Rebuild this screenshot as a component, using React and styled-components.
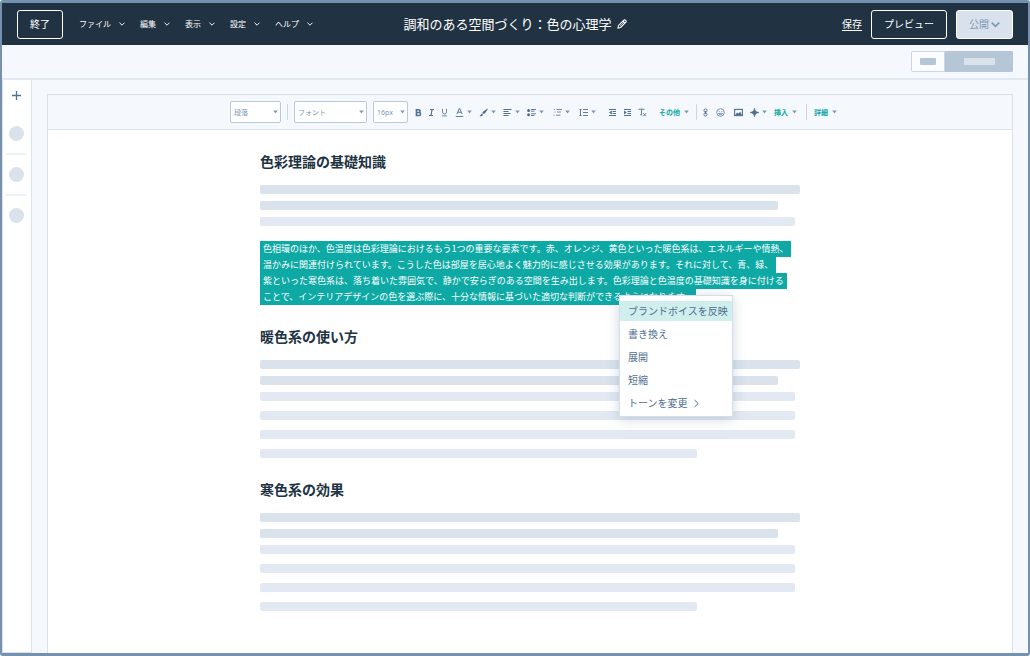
import React, { useState } from 'react';
import styled, { createGlobalStyle } from 'styled-components';

const colors = {
    navy: '#213343',
    slate: '#516f90',
    muted: '#7c98b6',
    line: '#dae3ed',
    field: '#b9c8dc',
    panel: '#f5f8fc',
    fill: '#b5c6d6',
    teal: '#0ea9a5',
}

const GlobalStyle = createGlobalStyle`
    *, *::before, *::after {
        box-sizing: border-box;
    }
    body {
        margin: 0;
        background: #fff;
        color: ${colors.navy};
        font-family: 'Noto Sans CJK JP', 'Noto Sans', sans-serif;
    }
    button, select {
        margin: 0;
        font-family: inherit;
    }
    svg {
        display: block;
        flex: none;
    }
`

const Frame = styled.div`
    display: flex;
    flex-direction: column;
    min-height: 100vh;
    border: solid #7691b0;
    border-width: 3px 2px;
    border-radius: 3px;
    background: ${colors.panel};
`

const Header = styled.header`
    display: grid;
    grid-template-columns: 1fr auto 1fr;
    align-items: center;
    height: 42px;
    padding: 0 15px;
    background: ${colors.navy};
    color: #fff;
`

const HeaderSide = styled.div`
    display: flex;
    align-items: center;
    justify-content: ${({ $end }) => ($end ? 'flex-end' : 'flex-start')};
    gap: ${({ $end }) => ($end ? '9px' : '16px')};
`

const HeaderButton = styled.button`
    display: flex;
    align-items: center;
    gap: 2px;
    height: 29px;
    padding: 0 12px;
    border: 1px solid #fff;
    border-radius: 3px;
    background: ${({ $primary }) => ($primary ? '#d9e2ec' : 'transparent')};
    color: ${({ $primary }) => ($primary ? colors.muted : '#fff')};
    font-size: 10px;
    line-height: 16px;
`

const MenuBar = styled.nav`
    display: flex;
    gap: 15px;
`

const MenuButton = styled.button`
    display: flex;
    align-items: center;
    gap: 8px;
    padding: 0;
    border: 0;
    background: none;
    color: #fff;
    font-size: 8px;
    line-height: 16px;
    white-space: nowrap;
`

const DocTitle = styled.div`
    display: flex;
    align-items: center;
    gap: 5px;

    h1 {
        margin: 0;
        font-size: 13px;
        line-height: 20px;
        font-weight: 400;
    }
`

const IconButton = styled.button`
    display: flex;
    align-items: center;
    justify-content: center;
    padding: 0;
    border: 0;
    background: none;
    color: inherit;
`

const SaveLink = styled.a`
    color: #fff;
    font-size: 10px;
    line-height: 16px;
    text-underline-offset: 2px;
`

const SubBar = styled.div`
    display: flex;
    align-items: center;
    justify-content: flex-end;
    height: 35px;
    padding: 0 15px;
    border-bottom: 2px solid #e1e9f1;
`

const Toggle = styled.div`
    display: flex;
    height: 21px;
    border-radius: 2px;
    overflow: hidden;
`

const ToggleButton = styled.button`
    display: flex;
    align-items: center;
    justify-content: center;
    width: ${({ $active }) => ($active ? '68px' : '34px')};
    padding: 0;
    border: 1px solid ${({ $active }) => ($active ? colors.fill : '#cbd6e2')};
    background: ${({ $active }) => ($active ? colors.fill : '#fafcfe')};

    span {
        width: ${({ $active }) => ($active ? '31px' : '16px')};
        height: 7px;
        border-radius: 1px;
        background: ${({ $active }) => ($active ? '#dae3ec' : colors.fill)};
    }
`

const Body = styled.div`
    display: flex;
    flex: 1;
`

const Sidebar = styled.aside`
    display: flex;
    flex-direction: column;
    align-items: center;
    gap: 12px;
    width: 30px;
    padding: 11px 2px 11px 0;
    border: 1px solid ${colors.line};
    border-top: 0;
    background: #fff;
    color: ${colors.slate};
`

const AddButton = styled(IconButton)`
    margin-bottom: 14px;
`

const Dot = styled.span`
    width: 15px;
    height: 15px;
    border-radius: 50%;
    background: #dae2ec;
`

const Rule = styled.span`
    width: 20px;
    height: 2px;
    background: #edf2f8;
`

const Main = styled.main`
    display: flex;
    flex: 1;
    min-width: 0;
    padding: 14px 15px 0;
`

const Paper = styled.div`
    flex: 1;
    min-width: 0;
    border: 1px solid ${colors.line};
    border-bottom: 0;
    background: #fff;
`

const Toolbar = styled.div`
    display: flex;
    align-items: center;
    justify-content: center;
    height: 35px;
    padding-left: 7px;
    border-bottom: 1px solid ${colors.line};
    background: ${colors.panel};
    color: ${colors.slate};
`

const Group = styled.div`
    display: flex;
    align-items: center;
    gap: ${({ $gap }) => $gap}px;
    margin-left: ${({ $before = 0 }) => $before}px;
`

const Divider = styled.span`
    width: 1px;
    height: 26px;
    background: #cbd6e2;
`

const ShortDivider = styled(Divider)`
    height: 16px;
`

const SelectBox = styled.label`
    display: grid;
    align-items: center;
    width: ${({ $width }) => $width}px;

    > * {
        grid-area: 1 / 1;
    }
    svg {
        justify-self: end;
        margin-right: 3px;
        pointer-events: none;
    }
`

const Select = styled.select`
    width: 100%;
    height: 22px;
    padding: 0 3px;
    appearance: none;
    border: 1px solid ${colors.field};
    border-radius: 2px;
    background: #fff;
    color: ${colors.muted};
    font-family: 'Noto Sans', 'Noto Sans CJK JP', sans-serif;
    font-size: 7px;
`

const ToolButton = styled.button`
    display: flex;
    align-items: center;
    gap: ${({ $text }) => ($text ? '4px' : '3px')};
    padding: 0;
    border: 0;
    background: none;
    color: ${({ $text }) => ($text ? colors.teal : colors.slate)};
    font-size: 7px;
    line-height: 12px;
    font-weight: 700;
    white-space: nowrap;
`

const Article = styled.article`
    max-width: 540px;
    margin: 0 auto;
    padding: 21px 0;
`

const Section = styled.section`
    & + & {
        margin-top: 21px;
    }

    h2 {
        margin: 0 0 14px;
        font-size: 14px;
        line-height: 20px;
        font-weight: 700;
    }
`

const Bars = styled.div`
    display: flex;
    flex-direction: column;
    gap: ${({ $loose }) => ($loose ? '10px' : '7px')};

    & + & {
        margin-top: 7px;
    }
`

const Bar = styled.span`
    width: ${({ $width }) => $width}%;
    height: 9px;
    border-radius: 2px;
    background: ${({ $light }) => ($light ? '#e3e9f2' : '#dae2ec')};
`

const SelectedText = styled.div`
    position: relative;
    margin-top: 15px;

    p {
        margin: 0;
        color: #fff;
        font-size: 9px;
        line-height: 16px;
    }
    p span {
        display: block;
        width: fit-content;
        padding: 0 3px;
        background: ${colors.teal};
        white-space: nowrap;
    }
`

const Popup = styled.div`
    position: absolute;
    top: 54px;
    left: 359px;
    display: flex;
    flex-direction: column;
    gap: 3px;
    width: 114px;
    padding: 5px 0 3px;
    border: 1px solid #d3deea;
    background: #fff;
    box-shadow: 0 2px 12px rgba(81, 111, 144, 0.28);
`

const PopupItem = styled.button`
    display: flex;
    align-items: center;
    gap: 5px;
    height: 20px;
    padding: 0 0 0 8px;
    border: 0;
    background: ${({ $active }) => ($active ? '#cfeeec' : 'none')};
    color: ${colors.slate};
    font-size: 10px;
    line-height: 18px;
    white-space: nowrap;
`

const Chevron = ({ width = 6, stroke = 1 }) => (
    <svg width={width} height={width} viewBox="0 0 10 10" fill="none" stroke="currentColor" strokeWidth={stroke * 1.6} aria-hidden="true">
        <path d="M0.8 2.8 L5 7 L9.2 2.8" />
    </svg>
)

const Caret = () => (
    <svg width="5" height="4" viewBox="0 0 5 4" fill="#7c98b6" aria-hidden="true">
        <path d="M0.2 0.5h4.6L2.5 3.5z" />
    </svg>
)

const icons = {
    bold: <path fill="none" strokeWidth="1.5" stroke="currentColor" d="M2.4 1.7h2.3a1.3 1.3 0 0 1 0 2.7H2.4zM2.4 4.4h2.7a1.5 1.5 0 0 1 0 3H2.4z" />,
    italic: <path fill="none" strokeWidth="1.2" stroke="currentColor" d="M3 1.5h4M2 7.5h4M5.1 1.5L3.9 7.5" />,
    underline: <path fill="none" strokeWidth="0.8" stroke="currentColor" d="M2.5 0.8v3.2a2 2 0 0 0 4 0V0.8M2 7.9h5" />,
    color: <path fill="none" strokeWidth="0.9" stroke="currentColor" d="M1.8 6.2L4.5 0.2L7.2 6.2M2.8 4.2h3.4M0.8 8.5h7.4" />,
    brush: <path d="M8.6 0.6L4.2 3.4L3.2 5L4.5 6L6 5.2L8.8 1.2zM2.7 5.4L0.6 8.3H3L4 6.4z" />,
    align: <path fill="none" strokeWidth="1" stroke="currentColor" d="M0.5 1.5h8M0.5 3.5h5M0.5 5.5h7M0.5 7.5h5" />,
    bullets: (
        <>
            <circle cx="1.6" cy="2.4" r="1.5" />
            <circle cx="1.6" cy="6.7" r="1.5" />
            <path fill="none" strokeWidth="0.9" stroke="currentColor" d="M4 1.5h5M4 3.2h3.4M4 5.8h5M4 7.5h3.4" />
        </>
    ),
    checklist: <path fill="none" strokeWidth="0.8" stroke="currentColor" d="M3.5 1.5h5.5M4 4h4M3 7.2h4.5M0.8 1.5h1M1.5 4h1M0.5 7.2h1" />,
    spacing: <path fill="none" strokeWidth="0.9" stroke="currentColor" d="M1.5 1v7M0.4 1.5h2.2M0.4 7.5h2.2M4 1.5h5M4 4.5h5M4 7.5h5" />,
    outdent: (
        <>
            <path fill="none" strokeWidth="1" stroke="currentColor" d="M1 1.5h7M4.5 3.5h3.5M4.5 5.5h3.5M1 7.5h7" />
            <path d="M3.8 2.5L1 4.5L3.8 6.5z" />
        </>
    ),
    indent: (
        <>
            <path fill="none" strokeWidth="1" stroke="currentColor" d="M1 1.5h7M4.5 3.5h3.5M4.5 5.5h3.5M1 7.5h7" />
            <path d="M1 2.5L3.8 4.5L1 6.5z" />
        </>
    ),
    clear: <path fill="none" strokeWidth="0.9" stroke="currentColor" d="M1 2V1.2h5V2M3.5 1.2v5.4M2.2 6.8h2M5.2 5.2L8 8.2M8 5.2L5.2 8.2" />,
    link: (
        <g fill="none" stroke="currentColor" strokeWidth="0.9">
            <rect x="3" y="0.9" width="3" height="3.2" rx="1.4" />
            <rect x="3" y="4.9" width="3" height="3.2" rx="1.4" />
            <path d="M4.5 3v3" />
        </g>
    ),
    smile: (
        <g fill="none" stroke="currentColor" strokeWidth="0.7">
            <circle cx="4.5" cy="4.5" r="3.8" />
            <path d="M2.5 5.4a2.2 2.2 0 0 0 4 0zM3.1 2.9v0.9M5.9 2.9v0.9" />
        </g>
    ),
    image: (
        <>
            <rect x="0.6" y="1.4" width="7.8" height="6.2" fill="none" stroke="currentColor" strokeWidth="1.1" />
            <path d="M1.2 6.9L3.2 4.4L4.6 5.6L6.2 3.8L8 6.9z" />
        </>
    ),
    sparkle: <path d="M4.5 0C5 3 6 4 9 4.5C6 5 5 6 4.5 9C4 6 3 5 0 4.5C3 4 4 3 4.5 0z" stroke="currentColor" strokeWidth="0.6" />,
}

const Tool = ({ icon, label, text, caret }) => (
    <ToolButton type="button" $text={Boolean(text)} aria-label={text ? undefined : label}>
        {text || (
            <svg width="9" height="9" viewBox="0 0 9 9" fill="currentColor" aria-hidden="true">
                {icons[icon]}
            </svg>
        )}
        {caret && <Caret />}
    </ToolButton>
)

const ToolSelect = ({ label, width, option }) => (
    <SelectBox $width={width}>
        <Select aria-label={label}>
            <option>{option}</option>
        </Select>
        <Caret />
    </SelectBox>
)

const menus = ['ファイル', '編集', '表示', '設定', 'ヘルプ']

const selectedLines = [
    '色相環のほか、色温度は色彩理論におけるもう1つの重要な要素です。赤、オレンジ、黄色といった暖色系は、エネルギーや情熱、',
    '温かみに関連付けられています。こうした色は部屋を居心地よく魅力的に感じさせる効果があります。それに対して、青、緑、',
    '紫といった寒色系は、落ち着いた雰囲気で、静かで安らぎのある空間を生み出します。色彩理論と色温度の基礎知識を身に付ける',
    'ことで、インテリアデザインの色を選ぶ際に、十分な情報に基づいた適切な判断ができるようになります。',
]

const actions = ['ブランドボイスを反映', '書き換え', '展開', '短縮', 'トーンを変更']

const LongPlaceholder = () => (
    <>
        <Bars>
            <Bar $width={100} />
            <Bar $width={96} />
        </Bars>
        <Bars $loose>
            <Bar $light $width={99} />
            <Bar $light $width={99} />
            <Bar $light $width={99} />
            <Bar $light $width={81} />
        </Bars>
    </>
)

const EditorHeader = () => (
    <Header>
        <HeaderSide>
            <HeaderButton type="button">終了</HeaderButton>
            <MenuBar>
                {menus.map(name => (
                    <MenuButton type="button" key={name}>
                        {name}
                        <Chevron />
                    </MenuButton>
                ))}
            </MenuBar>
        </HeaderSide>
        <DocTitle>
            <h1>調和のある空間づくり：色の心理学</h1>
            <IconButton type="button" aria-label="タイトルを編集">
                <svg width="10" height="10" viewBox="0 0 10 10" fill="none" stroke="currentColor" aria-hidden="true">
                    <path d="M1 9L1.5 6.4L6.6 1.3a1.3 1.3 0 0 1 2.1 2.1L3.6 8.5z" strokeWidth="1.1" />
                    <path d="M6 2.4L7.6 4" strokeWidth="1.6" />
                    <path d="M3 7L6.4 3.6" strokeWidth="0.7" />
                </svg>
            </IconButton>
        </DocTitle>
        <HeaderSide $end>
            <SaveLink href="#save">保存</SaveLink>
            <HeaderButton type="button">プレビュー</HeaderButton>
            <HeaderButton type="button" $primary>
                公開
                <Chevron width={9} stroke={1.2} />
            </HeaderButton>
        </HeaderSide>
    </Header>
)

const EditorToolbar = () => (
    <Toolbar role="toolbar">
        <Group $gap={6}>
            <ToolSelect label="スタイル" width={51} option="段落" />
            <ShortDivider />
            <ToolSelect label="書体" width={73} option="フォント" />
            <ToolSelect label="サイズ" width={35} option="16px" />
        </Group>
        <Group $gap={4} $before={6}>
            <Tool icon="bold" label="太字" />
            <Tool icon="italic" label="斜体" />
            <Tool icon="underline" label="下線" />
        </Group>
        <Group $gap={7} $before={6}>
            <Tool icon="color" label="文字色" caret />
            <Tool icon="brush" label="背景色" caret />
            <Tool icon="align" label="配置" caret />
        </Group>
        <Group $gap={9} $before={7}>
            <Tool icon="bullets" label="箇条書き" caret />
            <Tool icon="checklist" label="リスト" caret />
            <Tool icon="spacing" label="行間" caret />
        </Group>
        <Group $gap={6} $before={12}>
            <Tool icon="outdent" label="インデント解除" />
            <Tool icon="indent" label="インデント" />
            <Tool icon="clear" label="書式をクリア" />
        </Group>
        <Group $gap={7} $before={12}>
            <Tool text="その他" caret />
            <ShortDivider />
        </Group>
        <Group $gap={6} $before={4}>
            <Tool icon="link" label="リンク" />
            <Tool icon="smile" label="絵文字" />
        </Group>
        <Group $gap={7} $before={9}>
            <Tool icon="image" label="画像" />
            <Tool icon="sparkle" label="AI" caret />
            <Tool text="挿入" caret />
        </Group>
        <Group $gap={7} $before={9}>
            <ShortDivider />
            <Tool text="詳細" caret />
        </Group>
    </Toolbar>
)

const ActionPopup = () => {
    const [active, setActive] = useState(actions[0]);

    return (
        <Popup role="menu">
            {actions.map((name, i) => (
                <PopupItem
                    type="button"
                    role="menuitem"
                    key={name}
                    $active={name === active}
                    onMouseEnter={() => setActive(name)}
                >
                    {name}
                    {i === actions.length - 1 && (
                        <svg width="7" height="9" viewBox="0 0 7 9" fill="none" stroke="currentColor" aria-hidden="true">
                            <path d="M1.5 1L5.2 4.5L1.5 8" />
                        </svg>
                    )}
                </PopupItem>
            ))}
        </Popup>
    )
}

const App = () => (
    <>
        <GlobalStyle />
        <Frame>
            <EditorHeader />

            <SubBar>
                <Toggle>
                    <ToggleButton type="button" aria-label="編集モード"><span /></ToggleButton>
                    <ToggleButton type="button" aria-label="最適化モード" $active><span /></ToggleButton>
                </Toggle>
            </SubBar>

            <Body>
                <Sidebar>
                    <AddButton type="button" aria-label="追加">
                        <svg width="9" height="9" viewBox="0 0 9 9" stroke="currentColor" aria-hidden="true">
                            <path d="M4.5 0v9M0 4.5h9" strokeWidth="1.3" />
                        </svg>
                    </AddButton>
                    <Dot />
                    <Rule />
                    <Dot />
                    <Rule />
                    <Dot />
                </Sidebar>

                <Main>
                    <Paper>
                        <EditorToolbar />
                        <Article>
                            <Section>
                                <h2>色彩理論の基礎知識</h2>
                                <Bars>
                                    <Bar $width={100} />
                                    <Bar $width={96} />
                                    <Bar $light $width={99} />
                                </Bars>
                                <SelectedText>
                                    <p>
                                        {selectedLines.map(line => <span key={line}>{line}</span>)}
                                    </p>
                                    <ActionPopup />
                                </SelectedText>
                            </Section>
                            <Section>
                                <h2>暖色系の使い方</h2>
                                <LongPlaceholder />
                            </Section>
                            <Section>
                                <h2>寒色系の効果</h2>
                                <LongPlaceholder />
                            </Section>
                        </Article>
                    </Paper>
                </Main>
            </Body>
        </Frame>
    </>
)

export default App;
